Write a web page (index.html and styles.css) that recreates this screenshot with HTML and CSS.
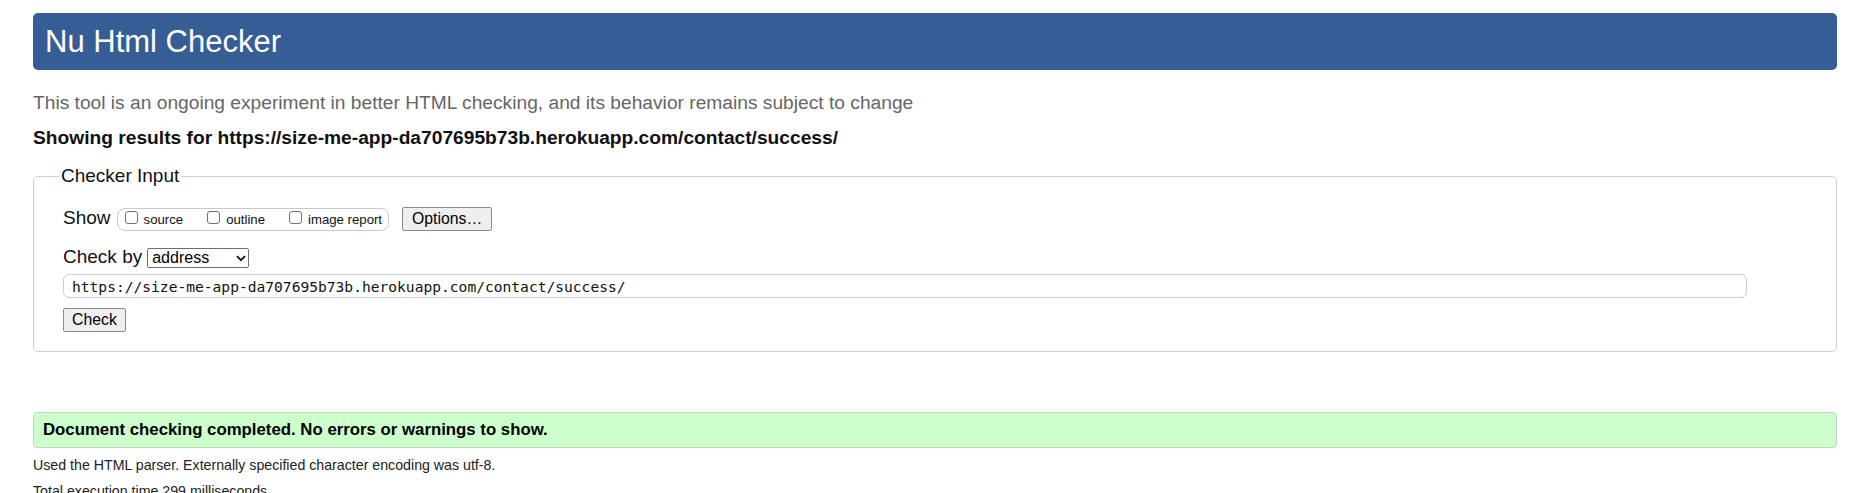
FILE: index.html
```html
<!DOCTYPE html>
<html lang="en">
<head>
<meta charset="utf-8">
<title>Nu Html Checker</title>
<link rel="stylesheet" href="styles.css">
</head>
<body>
<h1 class="title">Nu Html Checker</h1>
<p class="intro">This tool is an ongoing experiment in better HTML checking, and its behavior remains subject to change</p>
<p class="showing">Showing results for https://size-me-app-da707695b73b.herokuapp.com/contact/success/</p>
<form class="checker-form">
  <fieldset class="checker-input">
    <legend class="legend">Checker Input</legend>
    <div class="row row-show">
      <span class="row-label">Show</span>
      <span class="opts">
        <label class="opt"><input type="checkbox" class="cb"><span>source</span></label>
        <label class="opt"><input type="checkbox" class="cb"><span>outline</span></label>
        <label class="opt"><input type="checkbox" class="cb"><span>image report</span></label>
      </span>
      <button type="button" class="btn btn-options">Options…</button>
    </div>
    <div class="row row-by">
      <span class="row-label">Check by</span>
      <span class="select"><span class="select-value">address</span><svg class="chev" width="10" height="7" viewBox="0 0 10 7"><path d="M1 1.2 L5 5.2 L9 1.2" fill="none" stroke="#111" stroke-width="1.8"/></svg></span>
    </div>
    <div class="row row-url">
      <input class="url" type="text" value="https://size-me-app-da707695b73b.herokuapp.com/contact/success/">
    </div>
    <div class="row row-submit">
      <button type="button" class="btn btn-check">Check</button>
    </div>
  </fieldset>
</form>
<p class="success">Document checking completed. No errors or warnings to show.</p>
<p class="details">Used the HTML parser. Externally specified character encoding was utf-8.</p>
<p class="details">Total execution time 299 milliseconds.</p>
</body>
</html>
```
FILE: styles.css
```css
html, body {
  margin: 0;
  background: #fff;
}
body {
  padding: 13px 24px 0 33px;
  font-family: "Liberation Sans", Arial, sans-serif;
  color: #000;
  overflow: hidden;
}
.title {
  margin: 0;
  height: 57px;
  line-height: 57px;
  padding-left: 12px;
  background: #365d95;
  color: #fff;
  font-size: 31px;
  font-weight: normal;
  border-radius: 5px;
}
.intro {
  margin: 22px 0 0;
  font-size: 19.2px;
  line-height: 22px;
  color: #666;
}
.showing {
  margin: 13px 0 0;
  font-size: 19.2px;
  line-height: 22px;
  font-weight: bold;
  color: #111;
}
.checker-form {
  margin: 16px 0 0;
}
.checker-input {
  margin: 0;
  padding: 20px 29px 19px 29px;
  border: 1px solid #cfcfcf;
  border-radius: 5px;
  min-width: 0;
}
.legend {
  font-size: 19px;
  line-height: 22px;
  padding: 0 2px;
  margin-left: -4px;
  color: #111;
}
.row {
  display: flex;
  align-items: center;
}
.row-show { height: 24px; }
.row-by { height: 20px; margin-top: 17px; }
.row-url { margin-top: 6px; }
.row-submit { margin-top: 10px; }
.row-label {
  font-size: 19px;
  line-height: 22px;
  margin-top: -3px;
  color: #111;
}
.opts {
  display: inline-flex;
  align-items: center;
  height: 23px;
  box-sizing: border-box;
  margin-left: 6px;
  padding: 0 6px 0 7px;
  border: 1px solid #c8c8c8;
  border-radius: 8px;
  gap: 24px;
}
.opt {
  display: flex;
  align-items: center;
  gap: 6px;
  font-size: 13.2px;
  line-height: 15px;
  color: #111;
}
.cb {
  appearance: none;
  -webkit-appearance: none;
  margin: -3px 0 0;
  width: 13px;
  height: 13px;
  box-sizing: border-box;
  border: 1px solid #6f6f6f;
  border-radius: 3px;
  background: #fff;
}
.btn {
  font-family: "Liberation Sans", Arial, sans-serif;
  font-size: 15.8px;
  height: 24px;
  padding: 0 9px;
  background: #efefef;
  border: 1px solid #8a8a8a;
  border-radius: 2px;
  color: #000;
}
.btn-options {
  margin-left: 13px;
}
.btn-check {
  padding: 0 8px;
}
.select {
  display: inline-flex;
  align-items: center;
  justify-content: space-between;
  margin-left: 5px;
  width: 102px;
  height: 20px;
  box-sizing: border-box;
  padding: 0 2px 0 4px;
  border: 1px solid #6f6f6f;
  border-radius: 2px;
  background: #fff;
}
.select-value {
  font-size: 16px;
  line-height: 18px;
  color: #000;
}
.chev {
  display: block;
  margin-top: 1px;
}
.url {
  width: calc(100% - 60px);
  height: 24px;
  box-sizing: border-box;
  margin: 0;
  padding: 0 8px;
  border: 1px solid #cdcdcd;
  border-radius: 6px;
  font-family: "DejaVu Sans Mono", "Liberation Mono", monospace;
  font-size: 14.6px;
  color: #111;
  background: #fff;
}
.success {
  margin: 60px 0 0;
  padding: 7px 9px;
  line-height: 20px;
  font-size: 16.8px;
  font-weight: bold;
  background: #ccffcc;
  border: 1px solid #c2d6c2;
  border-radius: 4px;
  color: #000;
}
.details {
  margin: 9px 0 0;
  font-size: 14.2px;
  line-height: 17px;
  color: #222;
}
```
